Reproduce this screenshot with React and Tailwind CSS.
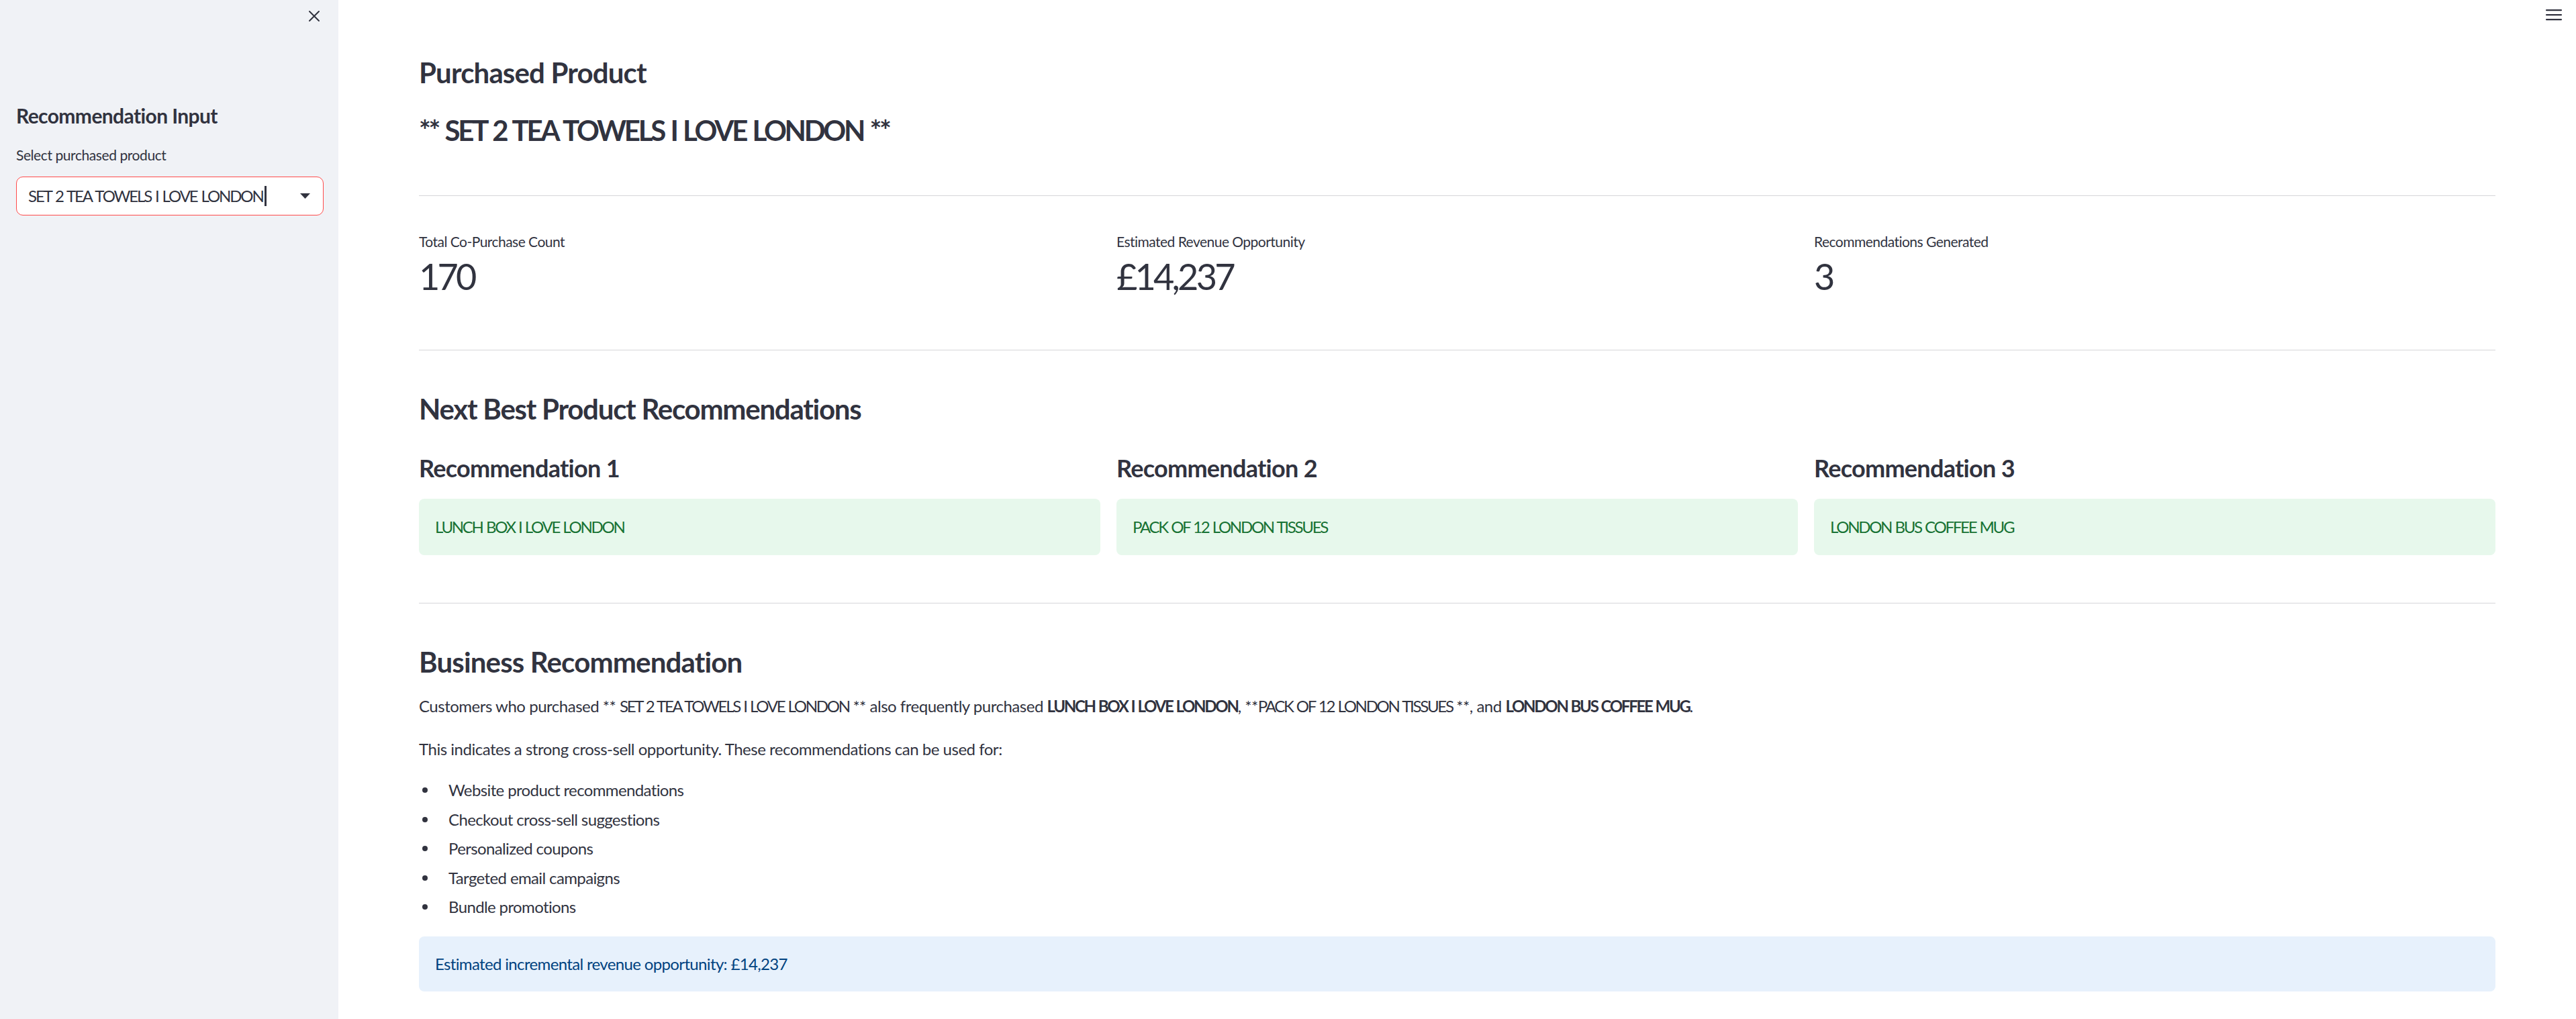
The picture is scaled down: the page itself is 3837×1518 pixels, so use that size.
import React from "react";

const metrics = [
  { label: "Total Co-Purchase Count", value: "170" },
  { label: "Estimated Revenue Opportunity", value: "£14,237" },
  { label: "Recommendations Generated", value: "3" },
];

const recs = ["LUNCH BOX I LOVE LONDON", "PACK OF 12 LONDON TISSUES", "LONDON BUS COFFEE MUG"];

const uses = [
  "Website product recommendations",
  "Checkout cross-sell suggestions",
  "Personalized coupons",
  "Targeted email campaigns",
  "Bundle promotions",
];

// uppercase product names need tighter tracking to sit at the reference widths
function Caps({ children, bold }) {
  return (
    <span className={`tracking-[-0.095em] [word-spacing:0.06em] ${bold ? "font-bold" : ""}`}>{children}</span>
  );
}

function Sidebar() {
  return (
    <aside className="relative w-[504px] shrink-0 bg-[#f0f2f6] px-[24px] pt-[154px]">
      {/* close button */}
      <button className="absolute right-[26px] top-[13px] flex h-[21px] w-[21px] items-center justify-center text-[#31333f]">
        <svg width="18" height="18" viewBox="0 0 18 18" fill="none" stroke="currentColor" strokeWidth="2" strokeLinecap="round">
          <path d="M2 2l14 14M16 2L2 16" />
        </svg>
      </button>

      <h2 className="text-[30px] leading-[36px] font-bold tracking-[-0.02em]">Recommendation Input</h2>
      <label className="mt-[28px] block text-[21px] leading-[26px] tracking-[-0.02em]">Select purchased product</label>
      <div className="mt-[19px] flex h-[58px] w-[458px] items-center rounded-[10px] border-[1.5px] border-[#ff4b4b] bg-white pl-[17px] pr-[19px]">
        <span className="whitespace-nowrap text-[24px] leading-[30px] tracking-[-0.088em] [word-spacing:0.08em]">
          SET 2 TEA TOWELS I LOVE LONDON
        </span>
        <span className="ml-[2px] h-[30px] w-[3px] bg-[#31333f]" />
        <svg className="ml-auto" width="15" height="8" viewBox="0 0 15 8">
          <path d="M0 0h15L7.5 8z" fill="#31333f" />
        </svg>
      </div>
    </aside>
  );
}

export default function App() {
  return (
    <div className="flex h-[1518px] w-full overflow-hidden bg-white font-[Lato,sans-serif] text-[#31333f]">
      <Sidebar />

      <main className="relative flex-1 px-[120px] pt-[83px]">
        {/* hamburger menu */}
        <svg className="absolute right-[21px] top-[13px]" width="24" height="18" viewBox="0 0 24 18" fill="#31333f">
          <rect x="0" y="1" width="24" height="2.2" rx="1" />
          <rect x="0" y="8" width="24" height="2.2" rx="1" />
          <rect x="0" y="15" width="24" height="2.2" rx="1" />
        </svg>

        <h3 className="text-[42px] leading-[50px] font-bold tracking-[-0.02em]">Purchased Product</h3>
        <h3 className="mt-[36px] text-[42px] leading-[50px] font-bold tracking-[-0.078em] [word-spacing:0.06em]">
          ** SET 2 TEA TOWELS I LOVE LONDON **
        </h3>

        <hr className="mt-[72px] border-t border-[#d6d6d9]" />

        {/* metrics */}
        <div className="mt-[55px] grid grid-cols-3 gap-[24px]">
          {metrics.map((m) => (
            <div key={m.label}>
              <div className="text-[21px] leading-[26px] tracking-[-0.025em]">{m.label}</div>
              <div className="mt-[7px] text-[54px] leading-[64px] tracking-[-0.07em]">{m.value}</div>
            </div>
          ))}
        </div>

        <hr className="mt-[77px] border-t border-[#d6d6d9]" />

        <h3 className="mt-[62px] text-[42px] leading-[50px] font-bold tracking-[-0.03em]">
          Next Best Product Recommendations
        </h3>

        <div className="mt-[41px] grid grid-cols-3 gap-[24px]">
          {recs.map((r, i) => (
            <div key={r}>
              <h4 className="text-[36px] leading-[44px] font-bold tracking-[-0.02em]">Recommendation {i + 1}</h4>
              <div className="mt-[24px] flex h-[84px] items-center rounded-[8px] bg-[#e7f8ec] px-[24px] text-[24px] tracking-[-0.095em] [word-spacing:0.06em] text-[#177233]">
                {r}
              </div>
            </div>
          ))}
        </div>

        <hr className="mt-[71px] border-t border-[#d6d6d9]" />

        <h3 className="mt-[62px] text-[42px] leading-[50px] font-bold tracking-[-0.02em]">Business Recommendation</h3>

        <p className="mt-[22px] text-[24px] leading-[38px] tracking-[-0.02em]">
          Customers who purchased ** <Caps>SET 2 TEA TOWELS I LOVE LONDON</Caps> ** also frequently purchased{" "}
          <Caps bold>LUNCH BOX I LOVE LONDON</Caps>, **<Caps>PACK OF 12 LONDON TISSUES</Caps> **, and{" "}
          <Caps bold>LONDON BUS COFFEE MUG</Caps>.
        </p>
        <p className="mt-[26px] text-[24px] leading-[38px] tracking-[-0.02em]">
          This indicates a strong cross-sell opportunity. These recommendations can be used for:
        </p>

        <ul className="mt-[23px] flex flex-col gap-[5.5px] text-[24px] leading-[38px] tracking-[-0.026em]">
          {uses.map((u) => (
            <li key={u} className="flex items-center">
              <span className="ml-[5px] mr-[31px] h-[8px] w-[8px] shrink-0 rounded-full bg-[#31333f]" />
              {u}
            </li>
          ))}
        </ul>

        <div className="mt-[25px] flex h-[82px] items-center rounded-[8px] bg-[#e7f1fc] px-[24px] text-[24px] tracking-[-0.027em] text-[#004280]">
          Estimated incremental revenue opportunity: £14,237
        </div>
      </main>
    </div>
  );
}
